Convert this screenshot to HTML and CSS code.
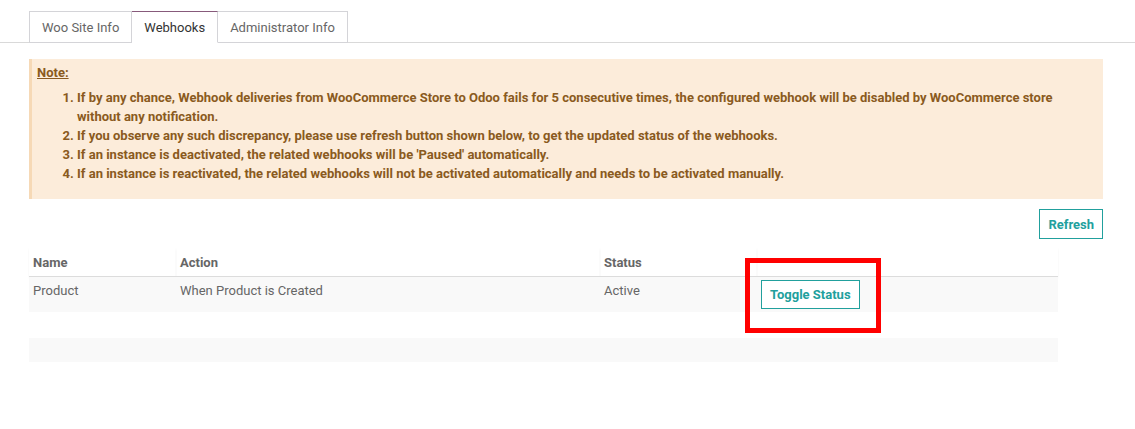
FILE: index.html
```html
<!DOCTYPE html>
<html lang="en">
  <head>
    <meta charset="UTF-8" />
    <meta name="viewport" content="width=device-width, initial-scale=1.0" />
    <title>Webhooks</title>
    <link rel="stylesheet" href="styles.css">
  </head>
  <body>
    <ul class="tabs">
      <li class="tab">Woo Site Info</li>
      <li class="tab active">Webhooks</li>
      <li class="tab">Administrator Info</li>
    </ul>
    <main class="page">
      <div class="note">
        <p class="note-title">Note:</p>
        <ol>
          <li>If by any chance, Webhook deliveries from WooCommerce Store to Odoo fails for 5 consecutive times, the configured webhook will be disabled by WooCommerce store without any notification.</li>
          <li>If you observe any such discrepancy, please use refresh button shown below, to get the updated status of the webhooks.</li>
          <li>If an instance is deactivated, the related webhooks will be 'Paused' automatically.</li>
          <li>If an instance is reactivated, the related webhooks will not be activated automatically and needs to be activated manually.</li>
        </ol>
      </div>
      <div class="actions">
        <button class="btn" type="button">Refresh</button>
      </div>
      <table class="hooks">
        <thead>
          <tr>
            <th class="col-name">Name</th>
            <th class="col-action">Action</th>
            <th class="col-status">Status</th>
            <th></th>
          </tr>
        </thead>
        <tbody>
          <tr class="row-odd">
            <td>Product</td>
            <td>When Product is Created</td>
            <td>Active</td>
            <td class="cell-toggle">
              <button class="btn btn-small" type="button">Toggle Status</button>
              <span class="highlight"></span>
            </td>
          </tr>
          <tr class="row-empty"><td colspan="4"></td></tr>
          <tr class="row-empty row-odd"><td colspan="4"></td></tr>
        </tbody>
      </table>
    </main>
  </body>
</html>
```

FILE: styles.css
```css
body {
  margin: 0;
  font-family: Roboto, "Liberation Sans", sans-serif;
  font-size: 13px;
  color: #666;
  background: #fff;
}

.tabs {
  display: flex;
  list-style: none;
  margin: 11px 0 0;
  padding: 0 0 0 29px;
  border-bottom: 1px solid #d9d9d9;
}

.tab {
  height: 30px;
  line-height: 31px;
  padding: 0 12px;
  margin-bottom: -1px;
  border: 1px solid #d4d4d8;
  border-left-width: 0;
  color: #666;
  background: #fff;
}

.tab:first-child {
  border-left-width: 1px;
}

.tab.active {
  color: #333;
  border-top-color: #875a7b;
  border-bottom-color: #fff;
}

.page {
  padding: 16px 32px 0 29px;
}

.note {
  background: #fcecda;
  border-left: 3px solid #f6d9b6;
  padding: 4px 16px 16px 5px;
  color: #8a5a20;
  font-weight: 700;
  line-height: 19px;
}

.note-title {
  margin: 0;
  text-decoration: underline;
}

.note ol {
  margin: 6px 0 0;
  padding-left: 40px;
}

.actions {
  display: flex;
  justify-content: flex-end;
  margin-top: 10px;
}

.btn {
  font-family: inherit;
  font-size: 13px;
  font-weight: 700;
  color: #21a09d;
  background: #fff;
  border: 1px solid #21a09d;
  height: 30px;
  padding: 0 8px;
}

.btn-small {
  height: 29px;
  padding: 0 8px;
}

.hooks {
  width: 1029px;
  border-collapse: collapse;
  margin-top: 9px;
}

.hooks th {
  text-align: left;
  font-weight: 700;
  color: #666;
  padding: 6px 4px;
  height: 16px;
  border-bottom: 1px solid #dcdcdc;
  box-shadow: 0 1px 2px rgba(0, 0, 0, 0.05);
}

.col-name {
  width: 139px;
}

.col-action {
  width: 416px;
}

.col-status {
  width: 149px;
}

.hooks td {
  padding: 6px 4px 0;
  vertical-align: top;
  height: 29px;
}

.row-odd {
  background: #f9f9f9;
}

.row-empty td {
  height: 24px;
  padding: 0;
}

.row-empty:not(.row-odd) td {
  height: 26px;
}

.cell-toggle {
  position: relative;
}

.cell-toggle .btn {
  margin-top: -3px;
}

.highlight {
  position: absolute;
  left: -12px;
  top: -19px;
  width: 126px;
  height: 65px;
  border: 5px solid #ff0000;
  pointer-events: none;
}
```
